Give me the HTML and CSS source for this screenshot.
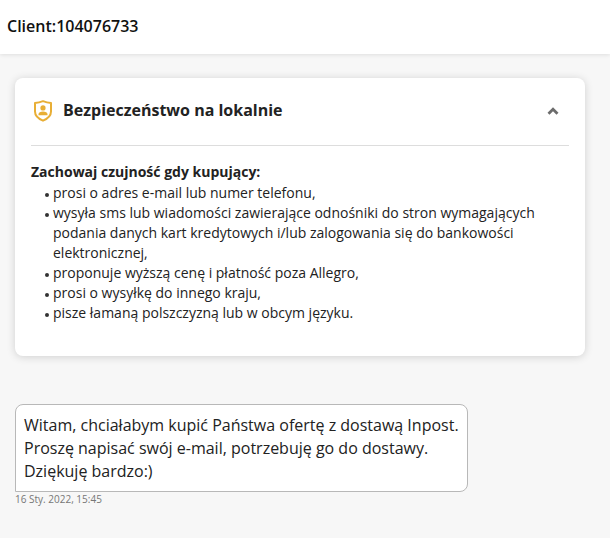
FILE: index.html
```html
<!DOCTYPE html>
<html lang="pl">
<head>
<meta charset="utf-8">
<meta name="viewport" content="width=device-width, initial-scale=1">
<title>Client:104076733</title>
<link rel="stylesheet" href="styles.css">
</head>
<body>
<header class="topbar">
  <h1 class="topbar-title">Client:104076733</h1>
</header>
<main class="conversation">
  <section class="card">
    <div class="card-header">
      <svg class="shield" viewBox="0 0 20 24" aria-hidden="true">
        <path d="M10 2.200C12.600 3.300 15.300 3.900 18 4V12.500c0 4.300-3.300 7.200-8 9.200-4.700-2-8-4.900-8-9.200V4C4.700 3.900 7.400 3.300 10 2.200Z" fill="none" stroke="#e8ae35" stroke-width="2" stroke-linejoin="round"/>
        <circle cx="10" cy="8.900" r="2.600" fill="#e8ae35"/>
        <path d="M5.500 16.300v-1.300c0-1.600 2-2.500 4.500-2.500s4.500.9 4.500 2.500v1.300Z" fill="#e8ae35"/>
      </svg>
      <h2 class="card-title">Bezpieczeństwo na lokalnie</h2>
      <button class="toggle" type="button" aria-label="Zwiń" aria-expanded="true">
        <svg class="chevron" viewBox="0 0 12 8" aria-hidden="true"><path d="M1.500 6.800 6 2.300l4.500 4.500" fill="none" stroke="#6c6c6c" stroke-width="2.800"/></svg>
      </button>
    </div>
    <div class="card-body">
      <p class="lead">Zachowaj czujność gdy kupujący:</p>
      <ul class="tips">
        <li>prosi o adres e-mail lub numer telefonu,</li>
        <li>wysyła sms lub wiadomości zawierające odnośniki do stron wymagających podania danych kart kredytowych i/lub zalogowania się do bankowości elektronicznej,</li>
        <li>proponuje wyższą cenę i płatność poza Allegro,</li>
        <li>prosi o wysyłkę do innego kraju,</li>
        <li>pisze łamaną polszczyzną lub w obcym języku.</li>
      </ul>
    </div>
  </section>
  <article class="message">
    <p class="bubble">Witam, chciałabym kupić Państwa ofertę z dostawą Inpost.<br>Proszę napisać swój e-mail, potrzebuję go do dostawy.<br>Dziękuję bardzo:)</p>
    <time class="stamp" datetime="2022-01-16T15:45">16 Sty. 2022, 15:45</time>
  </article>
</main>
</body>
</html>
```
FILE: styles.css
```css
* { box-sizing: border-box; }
body {
  margin: 0;
  min-height: 100vh;
  background: #f7f7f7;
  color: #222;
  font-family: "Open Sans", "Noto Sans", sans-serif;
  font-size: 14px;
  line-height: 20px;
}
h1, h2, p, ul { margin: 0; padding: 0; }
.topbar {
  padding: 16px 7px 18px;
  background: #fff;
  box-shadow: 0 1px 4px rgba(0, 0, 0, .1);
}
.topbar-title { color: #111; font-size: 16px; line-height: 20px; font-weight: 600; }
.conversation { padding: 24px 25px 24px 15px; }
.card {
  padding: 0 16px 32px;
  background: #fff;
  border-radius: 8px;
  box-shadow: 0 1px 8px rgba(0, 0, 0, .16);
}
.card-header {
  display: flex;
  align-items: center;
  padding: 20px 10px 22px 2px;
  border-bottom: 1px solid #ddd;
}
.shield { width: 20px; height: 24px; margin-right: 10px; }
.card-title { flex: 1; font-size: 16px; line-height: 25px; font-weight: 700; }
.toggle {
  display: flex;
  padding: 0;
  border: 0;
  background: none;
  cursor: pointer;
}
.chevron { width: 12px; height: 8px; }
.card-body { padding-top: 16px; }
.lead { font-weight: 700; }
.tips { padding: 1px 0 1px 22px; list-style: none; }
.tips li { position: relative; }
.tips li::before {
  content: "";
  position: absolute;
  left: -8px;
  top: 10px;
  width: 4px;
  height: 4px;
  border-radius: 50%;
  background: #333;
}
.message { margin-top: 48px; }
.bubble {
  width: fit-content;
  padding: 9px 8px 8px;
  background: #fff;
  border: 1px solid #b8b8b8;
  border-radius: 8px 8px 8px 0;
  font-size: 16px;
  line-height: 23px;
}
.stamp { display: block; font-size: 10px; line-height: 14px; color: #767676; }
```
